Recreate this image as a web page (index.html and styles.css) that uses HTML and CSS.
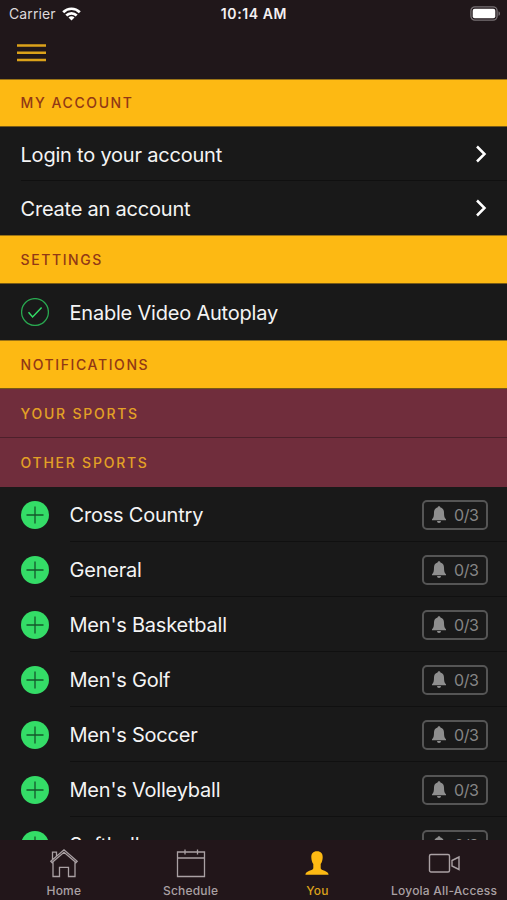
FILE: index.html
```html
<!DOCTYPE html>
<html lang="en">
<head>
<meta charset="utf-8">
<title>You</title>
<link rel="stylesheet" href="styles.css">
</head>
<body>
<svg class="defs" width="0" height="0" aria-hidden="true">
  <symbol id="plus" viewBox="0 0 28 28"><circle cx="14" cy="14" r="14" fill="#34dc67"/><path d="M14 5.500v17M5.500 14h17" stroke="#14572b" stroke-width="1.300"/></symbol>
  <symbol id="bell" viewBox="0 0 14 17"><path d="M7 .3c.9 0 1.400.6 1.400 1.300C10.900 2.200 12 4.200 12 6.500c0 4 .6 5.600 2 6.700v1H0v-1c1.400-1.100 2-2.700 2-6.700 0-2.300 1.100-4.300 3.600-4.900C5.600.9 6.100.3 7 .3zM5 14.900h4a2 2 0 0 1-4 0z" fill="#8e8e8e"/></symbol>
  <symbol id="chevron" viewBox="0 0 12 18"><path d="M2 1.500l7.500 7.500L2 16.500" fill="none" stroke="#fff" stroke-width="2.500"/></symbol>
</svg>
<div class="screen">
  <header class="top">
    <div class="status">
      <div class="signal"><span class="carrier">Carrier</span>
      <svg class="wifi" width="19" height="14" viewBox="0 0 19 14"><g fill="none" stroke="#fff" stroke-width="2.700"><path d="M1.200 5.200a11.700 11.700 0 0 1 16.600 0"/><path d="M4.300 8.500a7.300 7.300 0 0 1 10.400 0"/></g><path d="M9.500 13.600L6.500 10.600a4.200 4.200 0 0 1 6 0z" fill="#fff"/></svg></div>
      <span class="time">10:14 AM</span>
      <svg class="battery" width="31" height="15" viewBox="0 0 31 15"><rect x=".9" y=".9" width="26.200" height="13.200" rx="4" fill="none" stroke="#777174" stroke-width="1.300"/><rect x="2.700" y="2.700" width="22.600" height="9.600" rx="2" fill="#fff"/><path d="M28.500 5.200c2 .8 2 3.800 0 4.600z" fill="#777174"/></svg>
    </div>
    <svg class="menu" width="29" height="18" viewBox="0 0 29 18"><path d="M0 1.500h29M0 8.700h29M0 15.900h29" stroke="#dba21a" stroke-width="2.500"/></svg>
  </header>
  <main class="content">
    <h2 class="head gold account">MY ACCOUNT</h2>
    <div class="row link"><span class="label">Login to your account</span><svg class="chev"><use href="#chevron"/></svg></div>
    <div class="row link last"><span class="label">Create an account</span><svg class="chev"><use href="#chevron"/></svg></div>
    <h2 class="head gold">SETTINGS</h2>
    <div class="row option"><svg class="mark" viewBox="0 0 28 28"><circle cx="14" cy="14" r="13.400" fill="none" stroke="#29a850" stroke-width="1.300"/><path d="M7.500 14.300l4.100 4.600 9-9.300" fill="none" stroke="#34dc67" stroke-width="1.500"/></svg><span class="label">Enable Video Autoplay</span></div>
    <h2 class="head gold notices">NOTIFICATIONS</h2>
    <h2 class="head wine first">YOUR SPORTS</h2>
    <h2 class="head wine">OTHER SPORTS</h2>
    <div class="row sport"><svg class="mark"><use href="#plus"/></svg><span class="label">Cross Country</span><span class="count"><svg class="bell"><use href="#bell"/></svg>0/3</span></div>
    <div class="row sport"><svg class="mark"><use href="#plus"/></svg><span class="label">General</span><span class="count"><svg class="bell"><use href="#bell"/></svg>0/3</span></div>
    <div class="row sport"><svg class="mark"><use href="#plus"/></svg><span class="label">Men's Basketball</span><span class="count"><svg class="bell"><use href="#bell"/></svg>0/3</span></div>
    <div class="row sport"><svg class="mark"><use href="#plus"/></svg><span class="label">Men's Golf</span><span class="count"><svg class="bell"><use href="#bell"/></svg>0/3</span></div>
    <div class="row sport"><svg class="mark"><use href="#plus"/></svg><span class="label">Men's Soccer</span><span class="count"><svg class="bell"><use href="#bell"/></svg>0/3</span></div>
    <div class="row sport"><svg class="mark"><use href="#plus"/></svg><span class="label">Men's Volleyball</span><span class="count"><svg class="bell"><use href="#bell"/></svg>0/3</span></div>
    <div class="row sport"><svg class="mark"><use href="#plus"/></svg><span class="label">Softball</span><span class="count"><svg class="bell"><use href="#bell"/></svg>0/3</span></div>
  </main>
  <nav class="tabs">
    <div class="tab"><svg width="32" height="32" viewBox="0 0 32 32" fill="none" stroke="#aaa1a4" stroke-width="1.300"><path d="M2.800 13.200L16 1.800l13.200 11.400-1.200 1.400L16 4.300 4 14.600zM4.500 11.500V4.200h4v3.700M5 14v14.500h6.500v-9.200h9v9.200H27V14"/></svg><span>Home</span></div>
    <div class="tab"><svg width="32" height="32" viewBox="0 0 32 32" fill="none" stroke="#aaa1a4" stroke-width="1.300"><path d="M2.500 4h27v24.500h-27zM2.500 10h27M10 1.500v5M22.500 1.500v5"/></svg><span>Schedule</span></div>
    <div class="tab active"><svg width="32" height="32" viewBox="0 0 32 32"><path d="M16 3.200c-4 0-5.800 2.500-5.700 6 .1 2.800.8 5.200 2 6.800v4.300c0 2.600-7.700 2.200-7.900 6.500h23.200c-.2-4.300-7.900-3.900-7.900-6.500V16c1.200-1.600 1.900-4 2-6.800.1-3.500-1.700-6-5.700-6z" fill="#fdb913"/></svg><span>You</span></div>
    <div class="tab"><svg width="32" height="32" viewBox="0 0 32 32" fill="none" stroke="#aaa1a4" stroke-width="1.400"><rect x="1.500" y="6.500" width="20" height="17.500" rx="1.500"/><path d="M24 12.500l7-3.500v12.500l-7-3.500z"/></svg><span>Loyola All-Access</span></div>
  </nav>
</div>
</body>
</html>
```

FILE: styles.css
```css
* { box-sizing: border-box; }
body { margin: 0; background: #191919; font-family: Inter, "Liberation Sans", sans-serif; color: #f4f4f4; }
.defs { display: none; }
.screen { width: 507px; height: 900px; display: flex; flex-direction: column; overflow: hidden; }
svg { flex: none; display: block; }
.top { height: 79px; flex: none; background: #20171a; }
.status { height: 27px; display: grid; grid-template-columns: 1fr auto 1fr; align-items: center; padding: 0 6px 0 9px; }
.signal { display: flex; align-items: center; gap: 6px; }
.carrier { font-size: 14px; letter-spacing: 0.1px; color: #ddd9db; }
.time { font-size: 14px; font-weight: 600; letter-spacing: 0.6px; margin-right: 2px; color: #f4f0f2; }
.battery { justify-self: end; }
.menu { margin: 17px 0 0 17px; }
.content { flex: 1; min-height: 0; overflow: hidden; }
.head { height: 49px; margin: 0; padding: 0 20.500px; display: flex; align-items: center; font-size: 14px; font-weight: 500; letter-spacing: 1.6px; }
.gold { background: #fdb913; color: #913816; border-top: 1px solid #9a7316; border-bottom: 1px solid #775a16; }
.account { height: 48px; padding-bottom: 1px; }
.notices { padding-bottom: 1px; }
.wine { background: #702d3c; color: #e3a126; letter-spacing: 1.75px; }
.first { border-bottom: 1px solid #4d202b; }
.row { height: 55px; display: flex; align-items: center; padding: 0 19px 0 21px; }
.link { height: 54px; justify-content: space-between; }
.link, .sport { background: linear-gradient(#101010, #101010) 21px 100% / 100% 1px no-repeat; }
.link.last { background: none; }
.sport { background-position: 70px 100%; }
.option { height: 56px; }
.label { font-size: 20px; letter-spacing: -0.21px; white-space: nowrap; margin-left: -0.500px; padding-top: 1px; }
.chev { width: 12px; height: 18px; margin-right: 1px; }
.mark { width: 28px; height: 28px; margin-right: 21px; }
.count { width: 66px; height: 30px; margin-left: auto; border: 2px solid #555; border-radius: 5px; display: flex; align-items: center; gap: 8px; padding-left: 8px; font-size: 16px; letter-spacing: -0.4px; color: #858585; }
.bell { width: 14px; height: 17px; }
.tabs { height: 60px; flex: none; display: grid; grid-template-columns: repeat(4, 1fr); background: #22161a; color: #aaa1a4; }
.tab { display: flex; flex-direction: column; align-items: center; padding: 8px 0 0 1px; font-size: 12px; font-weight: 500; letter-spacing: 0.2px; line-height: 15px; gap: 3px; white-space: nowrap; }
.active { color: #dca11b; }
```
